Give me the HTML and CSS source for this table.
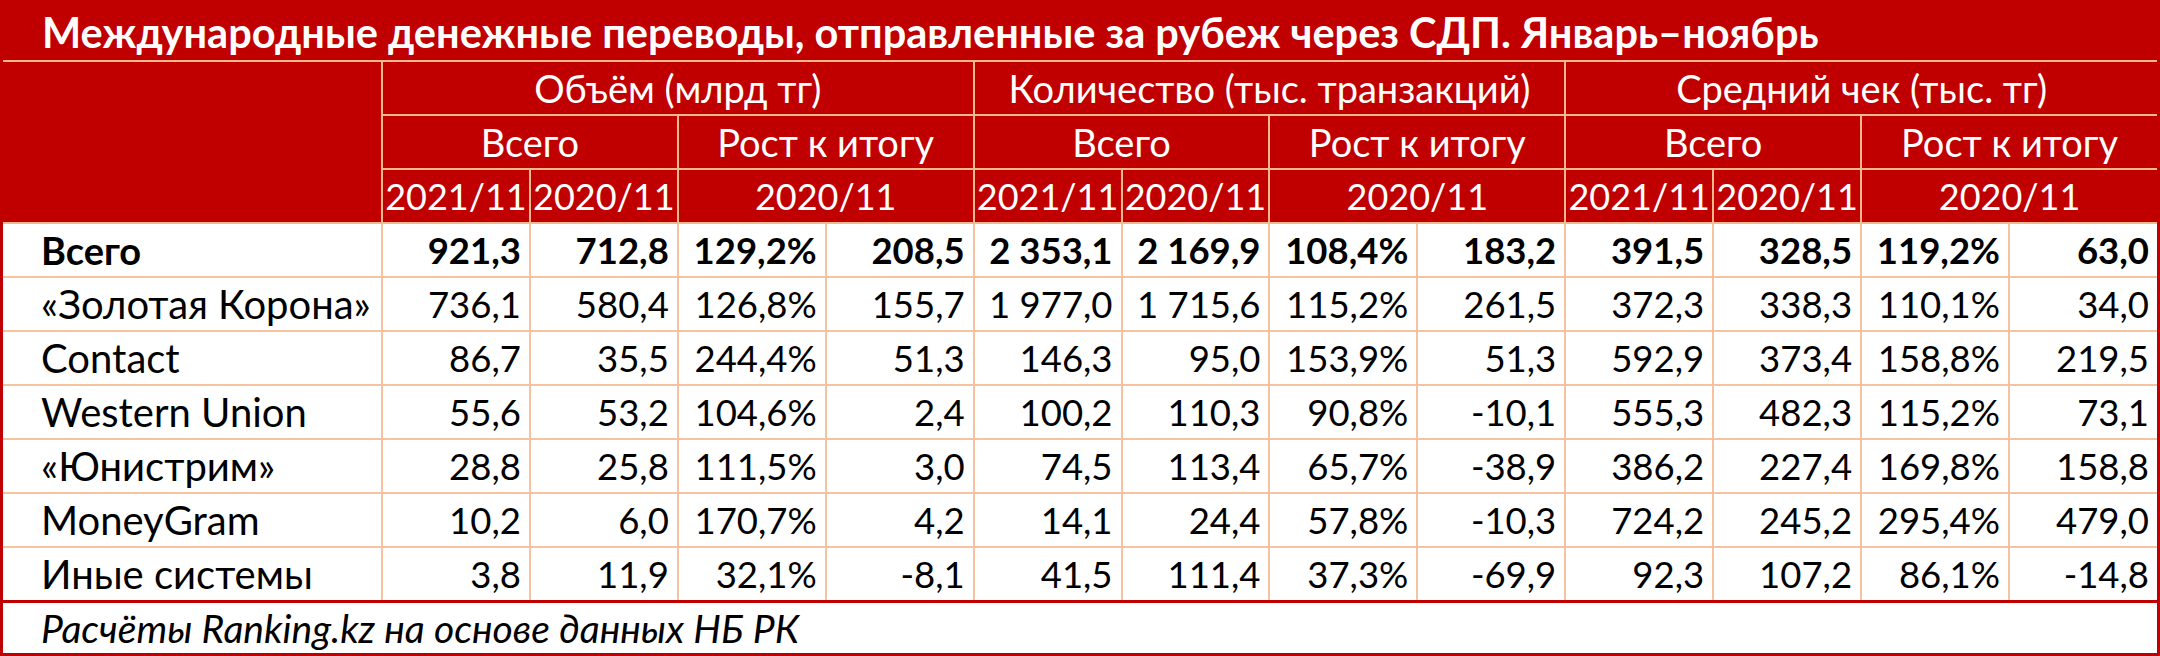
FILE: index.html
```html
<!DOCTYPE html>
<html lang="ru">
<head>
<meta charset="utf-8">
<title>Международные денежные переводы</title>
<link rel="stylesheet" href="styles.css">
</head>
<body>
<div class="sheet">
  <div class="title"><span class="title-text">Международные денежные переводы, отправленные за рубеж через СДП. Январь–ноябрь</span></div>
  <table class="grid">
    <colgroup>
      <col class="c-label">
      <col><col><col><col><col><col><col><col><col><col><col><col>
    </colgroup>
    <thead>
      <tr class="h1">
        <th class="corner" rowspan="3"></th>
        <th colspan="4">Объём (млрд тг)</th>
        <th colspan="4">Количество (тыс. транзакций)</th>
        <th colspan="4" class="last">Средний чек (тыс. тг)</th>
      </tr>
      <tr class="h2">
        <th colspan="2">Всего</th>
        <th colspan="2">Рост к итогу</th>
        <th colspan="2">Всего</th>
        <th colspan="2">Рост к итогу</th>
        <th colspan="2">Всего</th>
        <th colspan="2" class="last">Рост к итогу</th>
      </tr>
      <tr class="h3">
        <th>2021/11</th><th>2020/11</th><th colspan="2">2020/11</th>
        <th>2021/11</th><th>2020/11</th><th colspan="2">2020/11</th>
        <th>2021/11</th><th>2020/11</th><th colspan="2" class="last">2020/11</th>
      </tr>
    </thead>
    <tbody>
      <tr class="total">
        <td class="label">Всего</td>
        <td>921,3</td><td>712,8</td><td>129,2%</td><td>208,5</td>
        <td>2 353,1</td><td>2 169,9</td><td>108,4%</td><td>183,2</td>
        <td>391,5</td><td>328,5</td><td>119,2%</td><td class="last">63,0</td>
      </tr>
      <tr>
        <td class="label">«Золотая Корона»</td>
        <td>736,1</td><td>580,4</td><td>126,8%</td><td>155,7</td>
        <td>1 977,0</td><td>1 715,6</td><td>115,2%</td><td>261,5</td>
        <td>372,3</td><td>338,3</td><td>110,1%</td><td class="last">34,0</td>
      </tr>
      <tr>
        <td class="label">Contact</td>
        <td>86,7</td><td>35,5</td><td>244,4%</td><td>51,3</td>
        <td>146,3</td><td>95,0</td><td>153,9%</td><td>51,3</td>
        <td>592,9</td><td>373,4</td><td>158,8%</td><td class="last">219,5</td>
      </tr>
      <tr>
        <td class="label">Western Union</td>
        <td>55,6</td><td>53,2</td><td>104,6%</td><td>2,4</td>
        <td>100,2</td><td>110,3</td><td>90,8%</td><td>-10,1</td>
        <td>555,3</td><td>482,3</td><td>115,2%</td><td class="last">73,1</td>
      </tr>
      <tr>
        <td class="label">«Юнистрим»</td>
        <td>28,8</td><td>25,8</td><td>111,5%</td><td>3,0</td>
        <td>74,5</td><td>113,4</td><td>65,7%</td><td>-38,9</td>
        <td>386,2</td><td>227,4</td><td>169,8%</td><td class="last">158,8</td>
      </tr>
      <tr>
        <td class="label">MoneyGram</td>
        <td>10,2</td><td>6,0</td><td>170,7%</td><td>4,2</td>
        <td>14,1</td><td>24,4</td><td>57,8%</td><td>-10,3</td>
        <td>724,2</td><td>245,2</td><td>295,4%</td><td class="last">479,0</td>
      </tr>
      <tr>
        <td class="label">Иные системы</td>
        <td>3,8</td><td>11,9</td><td>32,1%</td><td>-8,1</td>
        <td>41,5</td><td>111,4</td><td>37,3%</td><td>-69,9</td>
        <td>92,3</td><td>107,2</td><td>86,1%</td><td class="last">-14,8</td>
      </tr>
    </tbody>
  </table>
  <div class="source">Расчёты Ranking.kz на основе данных НБ РК</div>
</div>
</body>
</html>
```

FILE: styles.css
```css
html, body {
  margin: 0;
  padding: 0;
  background: #ffffff;
}

.sheet {
  width: 2160px;
  height: 656px;
  box-sizing: border-box;
  border: 3px solid #c00000;
  background: #ffffff;
  font-family: Lato, "Noto Sans", sans-serif;
  color: #000000;
  display: flex;
  flex-direction: column;
}

.title {
  height: 57px;
  background: #c00000;
  border-bottom: 2px solid #f6b98f;
  display: flex;
  align-items: center;
  padding-left: 39px;
  color: #ffffff;
  font-weight: 700;
  font-size: 41.5px;
  white-space: nowrap;
}

.grid {
  width: 100%;
  border-collapse: collapse;
  table-layout: fixed;
}

.c-label {
  width: 379px;
}

.grid th {
  background: #c00000;
  color: #ffffff;
  font-weight: 400;
  font-size: 38px;
  line-height: 1;
  height: 52px;
  padding: 0;
  text-align: center;
  border: 2px solid #f6b98f;
  white-space: nowrap;
}

.grid .h3 th {
  font-size: 36px;
}

.grid th.corner {
  border-left: none;
  border-top: none;
}

.grid .h1 th {
  border-top: none;
}

.grid th.last,
.grid td.last {
  border-right: none;
}

.grid td {
  font-size: 36.5px;
  line-height: 1;
  height: 52px;
  padding: 0 8px 0 0;
  text-align: right;
  border: 2px solid #f6c3a0;
  white-space: nowrap;
}

.grid td.label {
  font-size: 40px;
  text-align: left;
  padding-left: 38px;
  border-left: none;
}

.grid tbody tr:last-child td {
  border-bottom: none;
}

.grid .total td {
  font-weight: 700;
}

.grid .total td.label {
  font-size: 38px;
}

.source {
  flex: 1;
  border-top: 3px solid #c00000;
  display: flex;
  align-items: center;
  padding-left: 38px;
  font-style: italic;
  font-size: 39px;
}
```
